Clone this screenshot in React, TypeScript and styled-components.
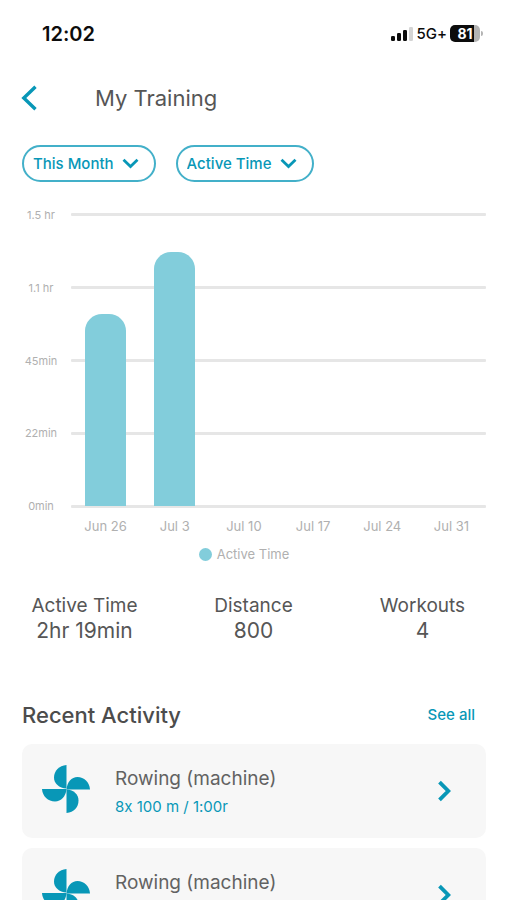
import React from "react";
import styled, { createGlobalStyle } from "styled-components";

const teal = "#0897b7";
const barColor = "#82cddb";

const GlobalStyle = createGlobalStyle`
  *, *::before, *::after { box-sizing: border-box; }
  body {
    margin: 0;
    background: #fff;
    color: #565656;
    font-family: Inter, "Liberation Sans", sans-serif;
    font-feature-settings: "calt" 0;
  }
  button, select { font: inherit; }
  h1, h2, p, dl, dd, ul { margin: 0; padding: 0; }
`;

const Screen = styled.div`
  display: flex;
  flex-direction: column;
  height: 100vh;
  overflow: hidden;
  background: #fff;
`;

const StatusBar = styled.div`
  flex: none;
  display: flex;
  align-items: center;
  justify-content: space-between;
  height: 67px;
  padding: 0 24px 0 42px;
  color: #0c0c0c;
`;

const Clock = styled.time`
  font-size: 20px;
  font-weight: 600;
`;

const StatusIcons = styled.div`
  display: flex;
  align-items: center;
  gap: 3px;
  font-size: 15px;
  font-weight: 500;
`;

const Battery = styled.div`
  display: flex;
  align-items: center;
  gap: 1px;
`;

const BatteryBody = styled.div`
  width: 30px;
  height: 17px;
  border-radius: 5px;
  background: linear-gradient(to right, #0c0c0c 81%, #b4b4b4 81%);
  color: #fff;
  font-size: 14px;
  font-weight: 700;
  line-height: 17px;
  text-align: center;
`;

const BatteryTip = styled.div`
  width: 2px;
  height: 5px;
  border-radius: 0 2px 2px 0;
  background: #b4b4b4;
`;

const Header = styled.header`
  flex: none;
  display: flex;
  align-items: center;
  height: 62px;
  padding: 0 21px;
`;

const BackButton = styled.button`
  display: flex;
  width: 74px;
  padding: 0;
  border: 0;
  background: none;
  color: ${teal};
  cursor: pointer;
`;

const Title = styled.h1`
  font-size: 22px;
  font-weight: 400;
  line-height: 28px;
`;

const Filters = styled.div`
  flex: none;
  display: flex;
  gap: 20px;
  padding: 16px 22px 0;
`;

const Filter = styled.label`
  display: grid;
  align-items: center;
  color: ${teal};
  > * { grid-area: 1 / 1; }
  > svg {
    justify-self: end;
    margin-right: 17px;
    pointer-events: none;
  }
`;

const FilterSelect = styled.select`
  appearance: none;
  field-sizing: content;
  height: 37px;
  padding: 0 40px 0 9px;
  border: 2px solid #43b0c9;
  border-radius: 19px;
  background: #fff;
  color: ${teal};
  font-size: 15px;
  font-weight: 500;
  cursor: pointer;
`;

const Chart = styled.figure`
  flex: none;
  display: grid;
  grid-template-columns: 38px 1fr;
  column-gap: 11px;
  margin: 31px 21px 0 22px;
  color: #b0b0b0;
`;

const YAxis = styled.div`
  display: flex;
  flex-direction: column;
  justify-content: space-between;
  margin: -4px 0;
  font-size: 11px;
  line-height: 12px;
  text-align: center;
`;

const Plot = styled.div`
  display: grid;
  height: 295px;
  > * { grid-area: 1 / 1; }
`;

const GridLines = styled.div`
  display: flex;
  flex-direction: column;
  justify-content: space-between;
`;

const GridLine = styled.div`
  height: 3px;
  border-radius: 1px;
  background: #e6e6e6;
`;

const Bars = styled.div`
  display: grid;
  grid-template-columns: repeat(6, 1fr);
  align-items: end;
  justify-items: center;
  height: 293px;
`;

const Bar = styled.div`
  width: 60%;
  border-radius: 17px 17px 0 0;
  background: ${barColor};
`;

const XAxis = styled.div`
  grid-column: 2;
  display: grid;
  grid-template-columns: repeat(6, 1fr);
  margin-top: 10px;
  font-size: 13px;
  line-height: 16px;
  text-align: center;
`;

const Legend = styled.figcaption`
  grid-column: 1 / -1;
  display: flex;
  align-items: center;
  justify-content: center;
  gap: 5px;
  margin-top: 12px;
  padding-right: 20px;
  font-size: 13px;
  line-height: 16px;
`;

const LegendDot = styled.span`
  width: 13px;
  height: 13px;
  border-radius: 50%;
  background: ${barColor};
`;

const Stats = styled.dl`
  flex: none;
  display: grid;
  grid-template-columns: repeat(3, 1fr);
  padding-top: 31px;
  text-align: center;
`;

const StatLabel = styled.dt`
  font-size: 19px;
  line-height: 25px;
`;

const StatValue = styled.dd`
  font-size: 21px;
  line-height: 25px;
`;

const SectionHead = styled.div`
  flex: none;
  display: flex;
  align-items: center;
  justify-content: space-between;
  padding: 58px 32px 0 22px;
`;

const SectionTitle = styled.h2`
  color: #4c4c4c;
  font-size: 22px;
  font-weight: 500;
  line-height: 28px;
`;

const SeeAll = styled.a`
  color: ${teal};
  font-size: 15px;
  font-weight: 500;
  line-height: 28px;
  text-decoration: none;
`;

const Activities = styled.ul`
  flex: none;
  display: flex;
  flex-direction: column;
  gap: 10px;
  padding: 15px 21px 0 22px;
  list-style: none;
`;

const ActivityCard = styled.a`
  display: flex;
  align-items: flex-start;
  height: 94px;
  padding: 21px 34px 21px 20px;
  border-radius: 10px;
  background: #f7f7f7;
  color: ${teal};
  text-decoration: none;
  > :last-child { align-self: center; }
`;

const ActivityText = styled.div`
  flex: 1;
  margin-left: 25px;
`;

const ActivityName = styled.p`
  color: #626262;
  font-size: 19px;
  line-height: 28px;
`;

const ActivityDetail = styled.p`
  font-size: 15px;
  line-height: 28px;
`;

function SignalIcon() {
  return (
    <svg width="23" height="16" viewBox="0 0 23 16" aria-hidden="true">
      <rect x="0" y="10" width="4" height="5" rx="1.3" fill="#0c0c0c" />
      <rect x="6" y="7" width="4" height="8" rx="1.3" fill="#0c0c0c" />
      <rect x="12" y="4" width="4" height="11" rx="1.3" fill="#0c0c0c" />
      <rect x="18" y="1" width="4" height="14" rx="1.3" fill="#d4d4d4" />
    </svg>
  );
}

function BackIcon() {
  return (
    <svg width="17" height="26" viewBox="0 0 17 26" fill="none" aria-hidden="true">
      <path d="M14.500 1.700 2.800 13l11.700 11.300" stroke="currentColor" strokeWidth="3.400" />
    </svg>
  );
}

function DownIcon() {
  return (
    <svg width="17" height="11" viewBox="0 0 17 11" fill="none" aria-hidden="true">
      <path d="M1.500 1.800 8.500 8.500l7-6.700" stroke="currentColor" strokeWidth="2.800" />
    </svg>
  );
}

function NextIcon() {
  return (
    <svg width="15" height="22" viewBox="0 0 15 22" fill="none" aria-hidden="true">
      <path d="M2.500 2.200 11.300 11l-8.800 8.800" stroke="currentColor" strokeWidth="3.800" />
    </svg>
  );
}

function FanIcon() {
  return (
    <svg width="48" height="48" viewBox="0 0 48 48" fill="currentColor" aria-hidden="true">
      <path d="M24.500 0v23.500C17 23 12 18.500 12 12.500 12 6 17 .5 24.500 0Z" />
      <path d="M48 24.500H24.500C25 17 29.500 12 35.500 12 42 12 47.500 17 48 24.500Z" />
      <path d="M24.500 48V24.500C32 25 36.500 29.500 36.500 35.500 36.500 42 32 47.500 24.500 48Z" />
      <path d="M0 24h24.500C24 31.500 19 36.500 13 36.500 6 36.500.5 31.500 0 24Z" />
    </svg>
  );
}

const maxMinutes = 90;
const scale = ["1.5 hr", "1.1 hr", "45min", "22min", "0min"];
const weeks = [
  { label: "Jun 26", minutes: 59 },
  { label: "Jul 3", minutes: 78 },
  { label: "Jul 10", minutes: 0 },
  { label: "Jul 17", minutes: 0 },
  { label: "Jul 24", minutes: 0 },
  { label: "Jul 31", minutes: 0 },
];
const stats = [
  { label: "Active Time", value: "2hr 19min" },
  { label: "Distance", value: "800" },
  { label: "Workouts", value: "4" },
];
const activities = [
  { id: 1, name: "Rowing (machine)", detail: "8x 100 m / 1:00r" },
  { id: 2, name: "Rowing (machine)", detail: "8x 100 m / 1:00r" },
];

export default function App() {
  return (
    <>
      <GlobalStyle />
      <Screen>
        <StatusBar>
          <Clock>12:02</Clock>
          <StatusIcons>
            <SignalIcon />
            <span>5G+</span>
            <Battery>
              <BatteryBody>81</BatteryBody>
              <BatteryTip />
            </Battery>
          </StatusIcons>
        </StatusBar>

        <Header>
          <BackButton type="button" aria-label="Back">
            <BackIcon />
          </BackButton>
          <Title>My Training</Title>
        </Header>

        <Filters>
          <Filter>
            <FilterSelect aria-label="Period" defaultValue="This Month">
              <option>This Month</option>
            </FilterSelect>
            <DownIcon />
          </Filter>
          <Filter>
            <FilterSelect aria-label="Measure" defaultValue="Active Time">
              <option>Active Time</option>
            </FilterSelect>
            <DownIcon />
          </Filter>
        </Filters>

        <Chart>
          <YAxis>
            {scale.map((label) => (
              <span key={label}>{label}</span>
            ))}
          </YAxis>
          <Plot>
            <GridLines>
              {scale.map((label) => (
                <GridLine key={label} />
              ))}
            </GridLines>
            <Bars>
              {weeks.map((week) => (
                <Bar key={week.label} style={{ height: `${(week.minutes / maxMinutes) * 100}%` }} />
              ))}
            </Bars>
          </Plot>
          <XAxis>
            {weeks.map((week) => (
              <span key={week.label}>{week.label}</span>
            ))}
          </XAxis>
          <Legend>
            <LegendDot />
            Active Time
          </Legend>
        </Chart>

        <Stats>
          {stats.map((stat) => (
            <div key={stat.label}>
              <StatLabel>{stat.label}</StatLabel>
              <StatValue>{stat.value}</StatValue>
            </div>
          ))}
        </Stats>

        <SectionHead>
          <SectionTitle>Recent Activity</SectionTitle>
          <SeeAll href="#all">See all</SeeAll>
        </SectionHead>

        <Activities>
          {activities.map((activity) => (
            <li key={activity.id}>
              <ActivityCard href={`#activity-${activity.id}`}>
                <FanIcon />
                <ActivityText>
                  <ActivityName>{activity.name}</ActivityName>
                  <ActivityDetail>{activity.detail}</ActivityDetail>
                </ActivityText>
                <NextIcon />
              </ActivityCard>
            </li>
          ))}
        </Activities>
      </Screen>
    </>
  );
}
